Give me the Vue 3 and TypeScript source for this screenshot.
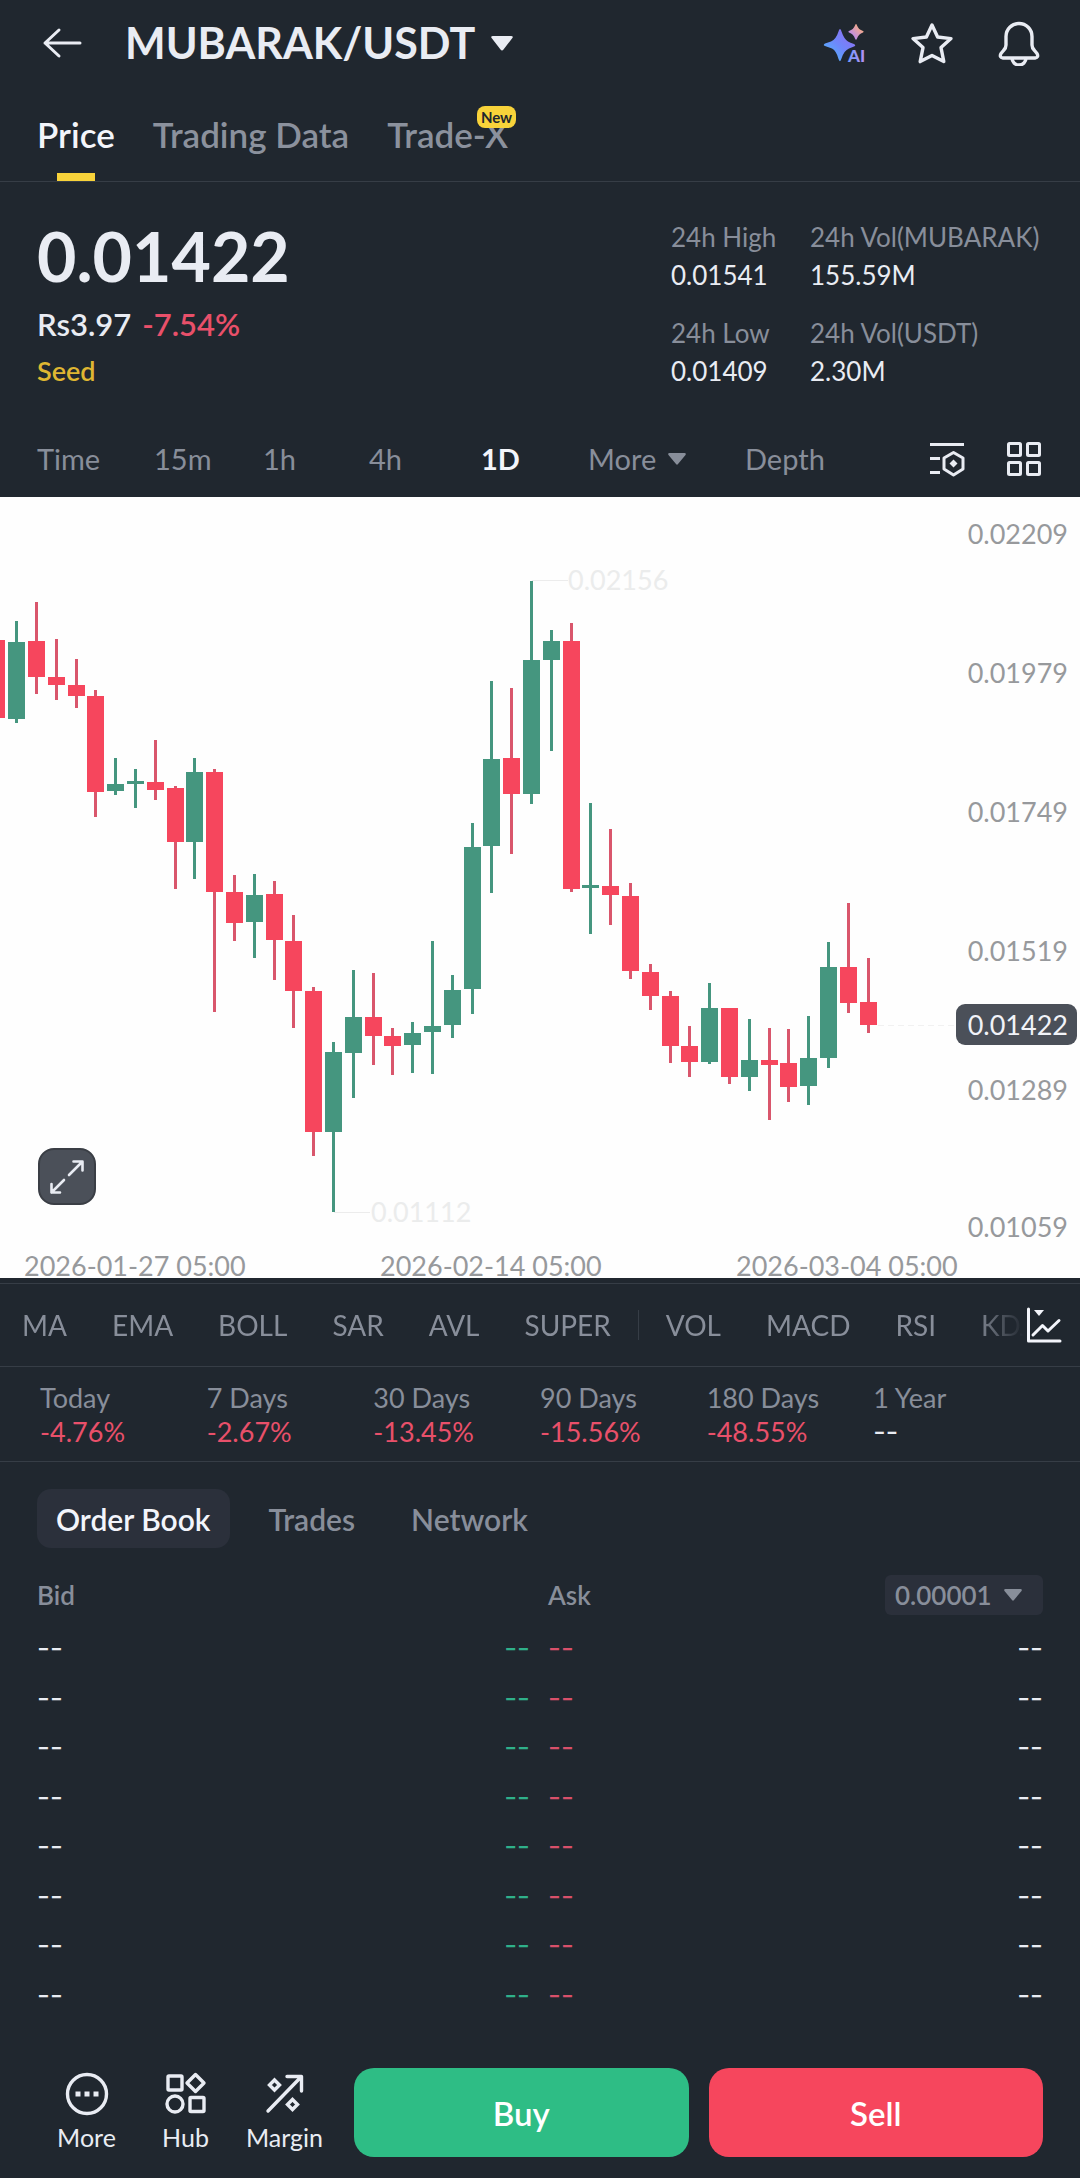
<script setup lang="ts">
import { computed, ref } from 'vue'

type Side = 'up' | 'down'

interface Candle {
  x: number
  side: Side
  high: number
  top: number
  bottom: number
  low: number
}

const tabs = ['Price', 'Trading Data', 'Trade-X']
const activeTab = ref('Price')

const stats = [
  { label: '24h High', value: '0.01541' },
  { label: '24h Vol(MUBARAK)', value: '155.59M' },
  { label: '24h Low', value: '0.01409' },
  { label: '24h Vol(USDT)', value: '2.30M' },
]

const intervals = ['Time', '15m', '1h', '4h', '1D']
const activeInterval = ref('1D')

const overlays = ['MA', 'EMA', 'BOLL', 'SAR', 'AVL', 'SUPER']
const oscillators = ['VOL', 'MACD', 'RSI', 'KDJ']

const periods = [
  { label: 'Today', value: '-4.76%' },
  { label: '7 Days', value: '-2.67%' },
  { label: '30 Days', value: '-13.45%' },
  { label: '90 Days', value: '-15.56%' },
  { label: '180 Days', value: '-48.55%' },
  { label: '1 Year', value: '--' },
]

const books = ['Order Book', 'Trades', 'Network']
const activeBook = ref('Order Book')
const precision = ref('0.00001')

// Each entry: side, high, body top, body bottom, low, in chart units.
const series: [Side, number, number, number, number][] = [
  ['down', 143, 143, 221, 221],
  ['up', 124, 145, 222, 226],
  ['down', 105, 144, 180, 197],
  ['down', 142, 180, 188, 203],
  ['down', 162, 188, 199, 211],
  ['down', 193, 199, 295, 320],
  ['up', 261, 287, 294, 298],
  ['up', 272, 284, 287, 311],
  ['down', 243, 285, 293, 303],
  ['down', 289, 291, 345, 392],
  ['up', 261, 275, 345, 382],
  ['down', 272, 275, 395, 515],
  ['down', 378, 395, 426, 444],
  ['up', 377, 398, 425, 461],
  ['down', 384, 397, 443, 483],
  ['down', 418, 444, 494, 531],
  ['down', 490, 494, 635, 659],
  ['up', 545, 555, 635, 715],
  ['up', 473, 520, 556, 601],
  ['down', 476, 520, 539, 568],
  ['down', 531, 539, 549, 578],
  ['up', 525, 536, 548, 576],
  ['up', 444, 529, 535, 577],
  ['up', 478, 493, 528, 541],
  ['up', 326, 350, 492, 517],
  ['up', 184, 262, 349, 396],
  ['down', 191, 261, 297, 357],
  ['up', 84, 163, 297, 307],
  ['up', 133, 144, 163, 254],
  ['down', 126, 144, 392, 395],
  ['up', 306, 388, 391, 437],
  ['down', 332, 389, 398, 428],
  ['down', 386, 399, 474, 482],
  ['down', 467, 475, 499, 513],
  ['down', 494, 499, 549, 566],
  ['down', 529, 549, 565, 580],
  ['up', 486, 511, 565, 567],
  ['down', 511, 511, 580, 587],
  ['up', 522, 563, 580, 594],
  ['down', 531, 563, 568, 623],
  ['down', 532, 566, 590, 605],
  ['up', 519, 561, 589, 608],
  ['up', 445, 470, 561, 571],
  ['down', 406, 470, 506, 516],
  ['down', 461, 505, 528, 536],
]

const candles = computed<Candle[]>(() =>
  series.map(([side, high, top, bottom, low], i) => ({
    x: Math.round((i - 1) * 19.8 + 16.2),
    side,
    high,
    top,
    bottom,
    low,
  })),
)

const priceAxis = [
  { y: 47, text: '0.02209' },
  { y: 186, text: '0.01979' },
  { y: 325, text: '0.01749' },
  { y: 464, text: '0.01519' },
  { y: 603, text: '0.01289' },
  { y: 740, text: '0.01059' },
]

const dateAxis = [
  { x: 24, text: '2026-01-27 05:00' },
  { x: 380, text: '2026-02-14 05:00' },
  { x: 736, text: '2026-03-04 05:00' },
]
</script>

<template>
  <main class="app">
    <header class="topbar">
      <button class="icon-btn" type="button" aria-label="Back">
        <svg width="40" height="32" viewBox="0 0 40 32" fill="none" stroke="currentColor" stroke-width="3" stroke-linecap="round" stroke-linejoin="round">
          <path d="M38 16H3M17 3L3 16l14 13" />
        </svg>
      </button>
      <button class="pair" type="button">
        <span>MUBARAK/USDT</span>
        <svg width="22" height="15" viewBox="0 0 22 15" fill="currentColor"><path d="M2 0h18q3 0 1 2.500L12.500 13.500q-1.500 2-3 0L1 2.500Q-1 0 2 0z" /></svg>
      </button>
      <div class="top-actions">
        <button class="icon-btn" type="button" aria-label="AI">
          <svg width="46" height="46" viewBox="0 0 46 46">
            <defs>
              <linearGradient id="ai-main" x1="0" y1="1" x2="1" y2="0">
                <stop offset="0.1" stop-color="#52b4fb" />
                <stop offset="0.5" stop-color="#6f86fb" />
                <stop offset="0.9" stop-color="#8f6ff0" />
              </linearGradient>
              <linearGradient id="ai-small" x1="0" y1="1" x2="1" y2="0">
                <stop offset="0.2" stop-color="#b98af2" />
                <stop offset="0.8" stop-color="#f5ab85" />
              </linearGradient>
              <linearGradient id="ai-text" x1="0" y1="0" x2="1" y2="0">
                <stop offset="0" stop-color="#6f9bff" />
                <stop offset="1" stop-color="#b690f2" />
              </linearGradient>
            </defs>
            <path fill="url(#ai-main)" d="M18 9q1 0 1.500 2.500Q22 19 26 21.500q2 1 6 2.500 2.500 1.500 0 2.500l-5 2q-5 2-7.500 10Q18 43.500 16.500 39q-2-8-6.500-10.500L3 26q-2.500-1 0-2.500l6-2q5-2 7.500-10Q17 9 18 9z" />
            <path fill="url(#ai-small)" d="M34 4q.8 0 1 1.500 1.500 4 6 5.500 1.500.8 0 1.600-4.500 1.400-6 6-1 2.500-2 0-1.500-4.600-6-6-1.500-.8 0-1.600 4.500-1.500 6-5.500Q33.300 4 34 4z" />
            <text class="ai-label" x="26" y="42" fill="url(#ai-text)">AI</text>
          </svg>
        </button>
        <button class="icon-btn" type="button" aria-label="Add to favourites">
          <svg width="46" height="46" viewBox="0 0 46 46" fill="none" stroke="currentColor" stroke-width="3.400" stroke-linejoin="round">
            <path d="M23 5l5.600 12 13.400 1.600-10 9 2.800 14L23 35.400 11.200 41.600l2.800-14-10-9L17.400 17z" />
          </svg>
        </button>
        <button class="icon-btn" type="button" aria-label="Alerts">
          <svg width="46" height="46" viewBox="0 0 46 46" fill="none" stroke="currentColor" stroke-width="3.400" stroke-linejoin="round">
            <path d="M10 16.500a13 13 0 0 1 26 0V25q0 3 2.500 5.500l2.500 3q2 4-2 4.500H7q-4-.5-2-4.500l2.500-3Q10 28 10 25z" />
            <path d="M16 38a7 7 0 0 0 14 0" />
          </svg>
        </button>
      </div>
    </header>

    <nav class="tabs">
      <button
        v-for="tab in tabs"
        :key="tab"
        type="button"
        class="tab"
        :class="{ active: tab === activeTab }"
        @click="activeTab = tab"
      >
        {{ tab }}
        <span v-if="tab === 'Trade-X'" class="badge">New</span>
      </button>
    </nav>

    <section class="quote">
      <div class="quote-main">
        <h1 class="price">0.01422</h1>
        <p class="fiat">Rs3.97 <span class="neg">-7.54%</span></p>
        <a class="tag" href="#">Seed</a>
      </div>
      <dl class="stats">
        <div v-for="stat in stats" :key="stat.label">
          <dt>{{ stat.label }}</dt>
          <dd>{{ stat.value }}</dd>
        </div>
      </dl>
    </section>

    <nav class="intervals">
      <button
        v-for="item in intervals"
        :key="item"
        type="button"
        :class="{ active: item === activeInterval }"
        @click="activeInterval = item"
      >
        {{ item }}
      </button>
      <button type="button" class="more">
        More
        <svg width="18" height="12" viewBox="0 0 18 12" fill="currentColor"><path d="M1.500 0h15q2 0 1 2L10 11q-1 1.500-2 0L.5 2q-1-2 1-2z" /></svg>
      </button>
      <button type="button">Depth</button>
      <button type="button" class="tool" aria-label="Chart settings">
        <svg width="36" height="36" viewBox="0 0 36 36" fill="none" stroke="currentColor" stroke-width="3">
          <path d="M1 3.500h34M1 17.500h10M1 31.500h10" />
          <path d="M24.500 11.500l9.500 5.500v11l-9.500 6-9.500-6V17z" stroke-linejoin="round" />
          <path d="M24.500 18.500l4 4-4 4-4-4z" fill="currentColor" stroke="none" />
        </svg>
      </button>
      <button type="button" class="tool" aria-label="Layout">
        <svg width="36" height="36" viewBox="0 0 36 36" fill="none" stroke="currentColor" stroke-width="3">
          <rect x="2.500" y="2.500" width="12" height="12" rx="1" />
          <rect x="21.500" y="2.500" width="12" height="12" rx="1" />
          <rect x="2.500" y="21.500" width="12" height="12" rx="1" />
          <rect x="21.500" y="21.500" width="12" height="12" rx="1" />
        </svg>
      </button>
    </nav>

    <section class="chart">
      <svg class="plot" viewBox="0 0 1080 781" role="img" aria-label="Daily candles">
        <g v-for="candle in candles" :key="candle.x" :class="candle.side">
          <rect class="wick" :x="candle.x - 1" :y="candle.high" width="3" :height="candle.low - candle.high" />
          <rect class="body" :x="candle.x - 8" :y="candle.top" width="17" :height="candle.bottom - candle.top" />
        </g>
        <path class="leader" d="M532 83.500h36M334 715.500h36" />
        <text class="extreme" x="568" y="93">0.02156</text>
        <text class="extreme" x="371" y="725">0.01112</text>
        <path class="last-line" d="M878 528.500h76" />
        <text v-for="mark in priceAxis" :key="mark.text" class="axis" x="1068" :y="mark.y" text-anchor="end">{{ mark.text }}</text>
        <rect class="last-box" x="956" y="507" width="121" height="41" rx="9" />
        <text class="last-text" x="1068" y="538" text-anchor="end">0.01422</text>
        <text v-for="mark in dateAxis" :key="mark.text" class="axis" :x="mark.x" y="779">{{ mark.text }}</text>
      </svg>
      <button class="expand" type="button" aria-label="Full screen">
        <svg width="36" height="36" viewBox="0 0 36 36" fill="none" stroke="currentColor" stroke-width="2.600" stroke-linecap="round" stroke-linejoin="round">
          <path d="M20 16L33 3M24.500 2.500H33.500V11.500M15 21L2.500 33.500M2.500 25v8.500H11" />
        </svg>
      </button>
    </section>

    <nav class="indicators">
      <div class="indicator-list">
        <button v-for="name in overlays" :key="name" type="button">{{ name }}</button>
        <span class="divider"></span>
        <button v-for="name in oscillators" :key="name" type="button">{{ name }}</button>
      </div>
      <button class="indicator-settings" type="button" aria-label="Indicator settings">
        <svg width="36" height="36" viewBox="0 0 36 36" fill="none" stroke="currentColor" stroke-width="3" stroke-linecap="round" stroke-linejoin="round">
          <path d="M2.500 2v32H34" />
          <path d="M7 28l9.500-9.500 5.500 5.500L33 13.500" />
          <path d="M8 3h10l-5 6z" fill="currentColor" stroke="none" />
        </svg>
      </button>
    </nav>

    <dl class="periods">
      <div v-for="period in periods" :key="period.label">
        <dt>{{ period.label }}</dt>
        <dd :class="period.value === '--' ? 'dashes' : 'neg'">{{ period.value }}</dd>
      </div>
    </dl>

    <nav class="book-tabs">
      <button
        v-for="book in books"
        :key="book"
        type="button"
        :class="{ active: book === activeBook }"
        @click="activeBook = book"
      >
        {{ book }}
      </button>
    </nav>

    <section class="book">
      <table>
        <thead>
          <tr>
            <th colspan="2" scope="colgroup">Bid</th>
            <th scope="col" class="ask">Ask</th>
            <th scope="col" class="right">
              <span class="precision">
                <select v-model="precision" aria-label="Price precision">
                  <option>0.00001</option>
                  <option>0.0001</option>
                  <option>0.001</option>
                </select>
                <svg width="18" height="12" viewBox="0 0 18 12" fill="currentColor"><path d="M1.500 0h15q2 0 1 2L10 11q-1 1.500-2 0L.5 2q-1-2 1-2z" /></svg>
              </span>
            </th>
          </tr>
        </thead>
        <tbody>
          <tr v-for="row in 8" :key="row">
            <td>--</td>
            <td class="bid-price">--</td>
            <td class="ask-price">--</td>
            <td class="right">--</td>
          </tr>
        </tbody>
      </table>
    </section>

    <footer class="trade-bar">
      <div class="shortcuts">
        <button type="button">
          <svg width="46" height="46" viewBox="0 0 46 46" fill="none" stroke="currentColor" stroke-width="3.400">
            <circle cx="23" cy="23" r="19.500" />
            <path d="M11.500 20.500h5v5h-5zM20.500 20.500h5v5h-5zM29.500 20.500h5v5h-5z" fill="currentColor" stroke="none" />
          </svg>
          More
        </button>
        <button type="button">
          <svg width="46" height="46" viewBox="0 0 46 46" fill="none" stroke="currentColor" stroke-width="3.400" stroke-linejoin="round">
            <rect x="5" y="5" width="14" height="14" rx="1" />
            <path d="M32.500 3.500l8.500 8.500-8.500 8.500L24 12z" />
            <circle cx="12" cy="33" r="8" />
            <rect x="27" y="26.500" width="14" height="14" rx="1" />
          </svg>
          Hub
        </button>
        <button type="button">
          <svg width="46" height="46" viewBox="0 0 46 46" fill="none" stroke="currentColor" stroke-width="3.400" stroke-linecap="round" stroke-linejoin="round">
            <path d="M6 40L39 6M25 5.500H39.500V20" />
            <path d="M12.500 9l5 5-5 5-5-5zM30.500 28.500l5 5-5 5-5-5z" stroke-linejoin="miter" />
          </svg>
          Margin
        </button>
      </div>
      <button type="button" class="cta buy">Buy</button>
      <button type="button" class="cta sell">Sell</button>
    </footer>
  </main>
</template>

<style>
body {
  margin: 0;
  background: #20272f;
}
</style>

<style scoped>
.app {
  min-height: 100vh;
  display: flex;
  flex-direction: column;
  background: #20272f;
  color: #e9ecf3;
  font-family: Lato, "Liberation Sans", sans-serif;
  font-size: 26px;
  line-height: 32px;
}

button,
select {
  margin: 0;
  padding: 0;
  border: 0;
  background: none;
  color: inherit;
  font: inherit;
}

svg {
  display: block;
  flex: none;
}

h1,
p,
dl,
dd {
  margin: 0;
}

.neg {
  color: #e9506a;
}

.topbar {
  display: flex;
  align-items: center;
  height: 86px;
  padding: 0 38px 0 42px;
}

.pair {
  display: flex;
  align-items: center;
  gap: 16px;
  margin-left: 43px;
  font-size: 43px;
  font-weight: 700;
  line-height: 52px;
}

.top-actions {
  display: flex;
  gap: 41px;
  margin-left: auto;
}

.tabs {
  display: flex;
  gap: 38px;
  height: 95px;
  padding: 0 37px;
  border-bottom: 1px solid #363d46;
}

.tab {
  position: relative;
  color: #8b919d;
  font-size: 35px;
  font-weight: 600;
  line-height: 40px;
}

.tab.active {
  color: #f3f5fb;
}

.tab.active::after {
  content: "";
  position: absolute;
  bottom: 0;
  left: 50%;
  width: 38px;
  height: 8px;
  margin-left: -19px;
  background: #f8d33a;
}

.badge {
  position: absolute;
  top: 20px;
  right: -8px;
  padding: 0 4px;
  border-radius: 8px;
  background: #f8d33a;
  color: #20262e;
  font-size: 15px;
  font-weight: 700;
  line-height: 22px;
}

.quote {
  display: flex;
  justify-content: space-between;
  height: 239px;
  padding: 36px 37px 0;
  box-sizing: border-box;
}

.price {
  font-size: 68px;
  font-weight: 700;
  line-height: 76px;
}

.fiat {
  display: flex;
  gap: 11px;
  margin-top: 12px;
  font-size: 31px;
  font-weight: 600;
  line-height: 36px;
}

.tag {
  display: block;
  margin-top: 13px;
  color: #dfb632;
  font-size: 27px;
  font-weight: 600;
  text-decoration: none;
}

.stats {
  display: grid;
  grid-template-columns: 108px auto;
  column-gap: 31px;
  row-gap: 26px;
  align-content: start;
  padding-top: 3px;
}

.stats > div:nth-child(even) {
  min-width: 233px;
}

.stats dt,
.periods dt {
  color: #888e9a;
}

.stats dd {
  margin-top: 6px;
}

.intervals {
  display: grid;
  grid-template-columns: 117fr 109fr 106fr 112fr 107fr 157fr 184fr 77fr 36px;
  align-items: center;
  justify-items: start;
  height: 76px;
  padding: 0 38px 0 37px;
  color: #888e9a;
  font-size: 29px;
}

.intervals .active {
  color: #f3f5fb;
  font-weight: 700;
}

.more {
  display: flex;
  align-items: center;
  gap: 12px;
}

.tool {
  color: #e9ecf3;
}

.chart {
  position: relative;
  background: #fefefe;
}

.plot {
  width: 100%;
  height: auto;
  overflow: visible;
}

.up {
  fill: #45967f;
}

.down {
  fill: #f6465d;
}

.down .wick {
  fill: #d9566c;
}

.leader {
  stroke: #ececec;
}

.extreme {
  fill: #ebecec;
  font-size: 27px;
}

.last-line {
  stroke: #f1f1f1;
  stroke-dasharray: 6 4;
}

.axis {
  fill: #97999c;
  font-size: 27px;
}

.last-box {
  fill: #4b5059;
}

.last-text {
  fill: #f1f3f8;
  font-size: 27px;
}

.ai-label {
  font-size: 17px;
  font-weight: 900;
}

.expand {
  position: absolute;
  bottom: 73px;
  left: 38px;
  display: flex;
  align-items: center;
  justify-content: center;
  width: 58px;
  height: 57px;
  border: 2px solid #3a3e45;
  border-radius: 16px;
  background: #4b5059;
}

.indicators {
  display: flex;
  align-items: center;
  height: 82px;
  margin-top: 5px;
  border-top: 1px solid #363d46;
  border-bottom: 1px solid #363d46;
  color: #888e9a;
  font-size: 28px;
}

.indicator-list {
  display: flex;
  flex: 1;
  align-items: center;
  gap: 45px;
  min-width: 0;
  padding-left: 22px;
  overflow: hidden;
  mask-image: linear-gradient(to left, transparent, #000 50px);
}

.divider {
  flex: none;
  width: 1px;
  height: 30px;
  margin: 0 -18px;
  background: #363d46;
}

.indicator-settings {
  padding: 0 18px 0 2px;
  color: #f3f5fb;
}

.periods {
  display: grid;
  grid-template-columns: repeat(6, 1fr);
  padding: 15px 40px;
  border-bottom: 1px solid #363d46;
  font-size: 27px;
}

.periods dt {
  line-height: 31px;
}

.periods dd {
  margin-top: 4px;
  line-height: 29px;
}

.dashes,
tbody {
  font-family: Inter, Lato, sans-serif;
}

.book-tabs {
  display: flex;
  padding: 27px 37px 0;
  color: #888e9a;
  font-size: 30px;
  font-weight: 600;
}

.book-tabs button {
  height: 59px;
  padding: 0 19px;
}

.book-tabs .active {
  margin-right: 20px;
  border-radius: 14px;
  background: #2b303b;
  color: #f3f5fb;
}

.book-tabs button + button {
  margin-right: 18px;
}

.book {
  padding: 22px 37px 0;
}

table {
  width: 100%;
  border-collapse: collapse;
  table-layout: fixed;
}

th,
td {
  padding: 0;
  text-align: left;
}

th {
  height: 50px;
  color: #888e9a;
  font-weight: 600;
}

.ask,
.ask-price {
  padding-left: 8px;
}

.right {
  text-align: right;
}

.precision {
  display: inline-flex;
  position: relative;
  align-items: center;
  border-radius: 6px;
  background: #2b303b;
}

.precision select {
  height: 40px;
  width: 158px;
  padding-left: 10px;
  appearance: none;
}

.precision svg {
  position: absolute;
  right: 21px;
  pointer-events: none;
}

td {
  height: 44px;
  padding-top: 6px;
  font-size: 28px;
}

tr:nth-child(even) td {
  height: 43px;
}

.bid-price {
  padding-right: 10px;
  color: #2fb08a;
  text-align: right;
}

.ask-price {
  color: #d9506a;
}

.trade-bar {
  display: flex;
  gap: 20px;
  margin-top: auto;
  padding: 0 37px 21px;
}

.shortcuts {
  display: flex;
  width: 297px;
}

.shortcuts button {
  display: flex;
  flex: 1;
  flex-direction: column;
  align-items: center;
  gap: 5px;
  padding-top: 3px;
  font-size: 25px;
  line-height: 30px;
}

.cta {
  flex: 1;
  height: 89px;
  border-radius: 20px;
  color: #fff;
  font-size: 33px;
  font-weight: 600;
}

.buy {
  background: #2ebd85;
}

.sell {
  background: #f6465d;
}
</style>
